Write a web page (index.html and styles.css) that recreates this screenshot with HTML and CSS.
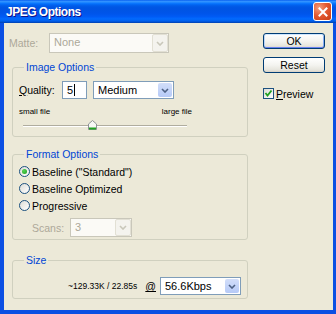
FILE: index.html
```html
<!DOCTYPE html>
<html lang="en">

<head>
    <meta charset="UTF-8" />
    <title>JPEG Options</title>
    <link rel="stylesheet" href="styles.css">
</head>

<body>
    <div class="window">
        <!-- Title bar -->
        <div class="titlebar">
            <span class="title">JPEG Options</span>
            <span class="close">
                <svg width="10" height="10" viewBox="0 0 10 10">
                    <path d="M1.5 1.5 L8.5 8.5 M8.5 1.5 L1.5 8.5" stroke="#fff" stroke-width="2" stroke-linecap="square" />
                </svg>
            </span>
        </div>

        <div class="client">
            <div class="main">
                <div class="matte-row">
                    <span class="label matte-label disabled">Matte:</span>
                    <div class="combo combo-disabled combo-matte">
                        <span class="combo-value">None</span>
                        <span class="combo-arrow">
                            <svg width="8" height="5" viewBox="0 0 8 5"><path d="M1 1 L4 4 L7 1" fill="none" stroke="#c9c7ba" stroke-width="1.6" /></svg>
                        </span>
                    </div>
                </div>

                <!-- Image options -->
                <fieldset class="group group-image">
                    <legend>Image Options</legend>
                    <div class="quality-row">
                        <span class="label quality-label"><u>Q</u>uality:</span>
                        <div class="textbox">5<span class="caret"></span></div>
                        <div class="combo combo-quality">
                            <span class="combo-value">Medium</span>
                            <span class="combo-arrow">
                                <svg width="8" height="5" viewBox="0 0 8 5"><path d="M1 1 L4 4 L7 1" fill="none" stroke="#4d6185" stroke-width="1.6" /></svg>
                            </span>
                        </div>
                    </div>
                    <div class="slider-labels">
                        <span>small file</span>
                        <span>large file</span>
                    </div>
                    <div class="slider">
                        <div class="track"></div>
                        <svg class="thumb" style="left: 69px" width="9" height="10" viewBox="0 0 9 10">
                            <path d="M0.5 4 L4.5 0.5 L8.5 4 V9.5 H0.5 Z" fill="#f7f7f4" stroke="#8d9295" />
                            <rect x="1" y="7.5" width="7" height="2" fill="#21a121" />
                        </svg>
                    </div>
                </fieldset>

                <!-- Format options -->
                <fieldset class="group group-format">
                    <legend>Format Options</legend>
                    <div class="radio-row">
                        <span class="radio checked"></span>
                        <span>Baseline ("Standard")</span>
                    </div>
                    <div class="radio-row">
                        <span class="radio"></span>
                        <span>Baseline Optimized</span>
                    </div>
                    <div class="radio-row">
                        <span class="radio"></span>
                        <span>Progressive</span>
                    </div>
                    <div class="scans-row">
                        <span class="label scans-label disabled">Scans:</span>
                        <div class="combo combo-disabled combo-scans">
                            <span class="combo-value">3</span>
                            <span class="combo-arrow">
                                <svg width="8" height="5" viewBox="0 0 8 5"><path d="M1 1 L4 4 L7 1" fill="none" stroke="#c9c7ba" stroke-width="1.6" /></svg>
                            </span>
                        </div>
                    </div>
                </fieldset>

                <!-- Size -->
                <fieldset class="group group-size">
                    <legend>Size</legend>
                    <div class="size-row">
                        <span class="size-text">~129.33K / 22.85s</span>
                        <span class="label at"><u>@</u></span>
                        <div class="combo combo-speed">
                            <span class="combo-value">56.6Kbps</span>
                            <span class="combo-arrow">
                                <svg width="8" height="5" viewBox="0 0 8 5"><path d="M1 1 L4 4 L7 1" fill="none" stroke="#4d6185" stroke-width="1.6" /></svg>
                            </span>
                        </div>
                    </div>
                </fieldset>
            </div>

            <!-- Buttons -->
            <div class="side">
                <button class="btn btn-default">OK</button>
                <button class="btn">Reset</button>
                <div class="check-row">
                    <span class="checkbox">
                        <svg width="9" height="9" viewBox="0 0 9 9"><path d="M1.5 4 L3.5 6.5 L7.5 1.5" fill="none" stroke="#21a121" stroke-width="1.8" /></svg>
                    </span>
                    <span><u>P</u>review</span>
                </div>
            </div>
        </div>
    </div>
</body>

</html>
```

FILE: styles.css
```css
/* General styling */
body {
    margin: 0;
    font-family: "Liberation Sans", Arial, sans-serif;
    font-size: 10.5px;
    color: #000;
}

.window {
    width: 336px;
    height: 314px;
    background-color: #0b4fe3;
    display: flex;
    flex-direction: column;
}

/* Title bar */
.titlebar {
    height: 23px;
    flex: none;
    display: flex;
    align-items: center;
    justify-content: space-between;
    padding: 0 4px 0 6px;
    background: linear-gradient(to bottom, #0058ee 0%, #3593ff 5%, #288eff 9%, #127dff 13%, #036ffc 17%, #0262ee 22%, #0057e5 30%, #0054e3 40%, #0055eb 60%, #005bf5 72%, #026afe 82%, #0062ef 90%, #0052d6 95%, #0040ab 100%);
}

.title {
    color: #fff;
    font-weight: bold;
    font-size: 12px;
    letter-spacing: -0.5px;
    text-shadow: 1px 1px #0f1089;
}

.close {
    width: 17px;
    height: 17px;
    border: 1px solid #fff;
    border-radius: 3px;
    display: flex;
    align-items: center;
    justify-content: center;
    background: radial-gradient(circle at 30% 30%, #f4a080 0%, #e45a32 45%, #c83c14 100%);
}

/* Dialog body */
.client {
    flex: 1;
    margin: 0 3px 4px 4px;
    background-color: #ece9d8;
    display: flex;
}

.main {
    width: 236px;
    padding: 10px 0 0 8px;
}

.side {
    margin-left: 15px;
    padding-top: 10px;
    width: 62px;
}

.label {
    display: inline-block;
}

.disabled {
    color: #aca899;
}

/* Combo boxes */
.combo {
    display: flex;
    align-items: stretch;
    box-sizing: border-box;
    height: 19px;
    border: 1px solid #7f9db9;
    background-color: #fff;
}

.combo-value {
    flex: 1;
    padding-left: 4px;
    line-height: 17px;
    font-size: 11px;
}

.combo-arrow {
    width: 14px;
    margin: 1px;
    border-radius: 2px;
    background: linear-gradient(to bottom, #d2def9, #b6caf7);
    display: flex;
    align-items: center;
    justify-content: center;
}

.combo-disabled {
    border-color: #c9c7ba;
    background-color: #fbfaf6;
    color: #aca899;
}

.combo-disabled .combo-arrow {
    background: #f4f3ee;
    border: 1px solid #e2e0d4;
    margin: 0;
}

.matte-row {
    display: flex;
    align-items: center;
    height: 20px;
}

.matte-label {
    width: 40px;
    margin-left: -3px;
}

.combo-matte {
    width: 120px;
    height: 20px;
}

/* Group boxes */
.group {
    margin: 0;
    border: 1px solid #d0d0bf;
    border-radius: 3px;
    padding: 0 6px;
}

.group legend {
    color: #0046d5;
    line-height: 13px;
    padding: 0 2px;
    margin-left: 5px;
}

.group-image {
    margin-top: 8px;
    padding-top: 7px;
    padding-bottom: 5px;
}

.group-format {
    margin-top: 11px;
    padding-top: 2px;
    padding-bottom: 2px;
}

.group-size {
    margin-top: 14px;
    padding-top: 10px;
    padding-bottom: 3px;
}

.quality-row {
    display: flex;
    align-items: center;
    height: 18px;
}

.quality-label {
    width: 43px;
}

.textbox {
    box-sizing: border-box;
    width: 25px;
    height: 18px;
    border: 1px solid #7f9db9;
    background-color: #fff;
    padding-left: 4px;
    line-height: 16px;
    font-size: 11px;
    display: flex;
    align-items: center;
    margin-right: 6px;
}

.caret {
    width: 1px;
    height: 12px;
    background-color: #000;
    margin-left: 1px;
}

.combo-quality {
    width: 81px;
    height: 18px;
}

.slider-labels {
    margin-top: 8px;
    width: 173px;
    display: flex;
    justify-content: space-between;
    font-size: 8px;
    line-height: 10px;
}

.slider {
    position: relative;
    margin-top: 3px;
    padding-top: 5px;
    height: 6px;
}

.track {
    margin-left: 4px;
    width: 164px;
    border-top: 1px solid #b0ad9f;
    border-bottom: 1px solid #fff;
}

.thumb {
    position: absolute;
    top: 0;
}

/* Radios */
.radio-row {
    display: flex;
    align-items: center;
    gap: 2px;
    height: 17px;
}

.radio {
    box-sizing: border-box;
    width: 11px;
    height: 11px;
    border: 1px solid #1c5180;
    border-radius: 50%;
    background: linear-gradient(135deg, #dcdcd6, #fff);
    display: flex;
    align-items: center;
    justify-content: center;
}

.radio.checked::after {
    content: "";
    width: 5px;
    height: 5px;
    border-radius: 50%;
    background: radial-gradient(circle at 35% 35%, #55d455, #21a121);
}

.scans-row {
    display: flex;
    align-items: center;
    margin-top: 4px;
    height: 19px;
}

.scans-label {
    width: 38px;
    margin-left: 13px;
}

.combo-scans {
    width: 62px;
}

/* Size */
.size-row {
    display: flex;
    align-items: center;
    justify-content: flex-end;
    height: 18px;
}

.size-text {
    font-size: 8.5px;
    margin-right: 8px;
}

.at {
    margin-right: 4px;
}

.combo-speed {
    width: 81px;
    height: 18px;
}

/* Buttons */
.btn {
    display: block;
    box-sizing: border-box;
    width: 62px;
    height: 16px;
    padding: 0;
    font-family: inherit;
    font-size: 10.5px;
    line-height: 14px;
    color: #000;
    border: 1px solid #003c74;
    border-radius: 3px;
    background: linear-gradient(to bottom, #fff 0%, #f4f4f0 50%, #e6e5dd 85%, #d6d0c5 100%);
}

.btn + .btn {
    margin-top: 8px;
}

.btn-default {
    box-shadow: inset 0 1px #cee7ff, inset 0 -1px #6982ee, inset 1px 0 #bcd4f6, inset -1px 0 #89adf4;
}

.check-row {
    display: flex;
    align-items: center;
    gap: 2px;
    margin-top: 15px;
    height: 11px;
}

.checkbox {
    box-sizing: border-box;
    width: 11px;
    height: 11px;
    border: 1px solid #1c5180;
    background: linear-gradient(135deg, #dcdcd6, #fff);
    display: flex;
    align-items: center;
    justify-content: center;
}
```
